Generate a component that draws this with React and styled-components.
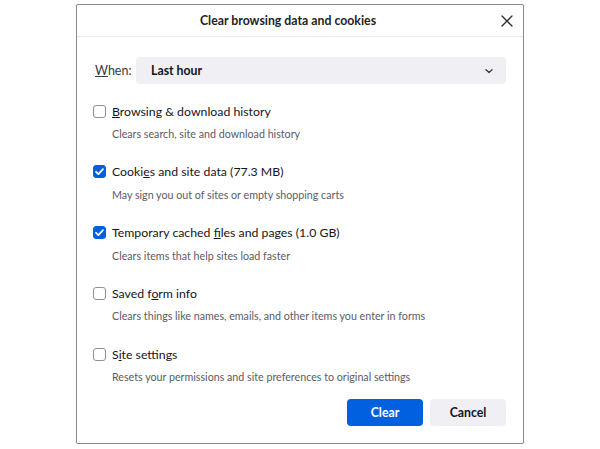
import React from 'react'
import styled, { createGlobalStyle } from 'styled-components'

const GlobalStyle = createGlobalStyle`
   html, body {
      margin: 0;
      padding: 0;
      background: #ffffff;
      font-family: Lato, "Noto Sans", sans-serif;
      color: #15141a;
   }
`

const items = [
   {
      label: ['', 'B', 'rowsing & download history'],
      desc: 'Clears search, site and download history',
      checked: false,
   },
   {
      label: ['Cooki', 'e', 's and site data (77.3 MB)'],
      desc: 'May sign you out of sites or empty shopping carts',
      checked: true,
   },
   {
      label: ['Temporary cached ', 'f', 'iles and pages (1.0 GB)'],
      desc: 'Clears items that help sites load faster',
      checked: true,
   },
   {
      label: ['Saved f', 'o', 'rm info'],
      desc: 'Clears things like names, emails, and other items you enter in forms',
      checked: false,
   },
   {
      label: ['S', 'i', 'te settings'],
      desc: 'Resets your permissions and site preferences to original settings',
      checked: false,
   },
]

const Check = ({ checked }) => (
   <Box checked={checked}>
      {checked && (
         <svg width="11" height="11" viewBox="0 0 12 12">
            <path
               d="M2.2 6.3 L4.8 8.8 L9.8 3.4"
               fill="none"
               stroke="#ffffff"
               strokeWidth="1.9"
               strokeLinecap="round"
               strokeLinejoin="round"
            />
         </svg>
      )}
   </Box>
)

export default function App() {
   return (
      <Page>
         <GlobalStyle />
         <Dialog>
            <Header>
               <Title>Clear browsing data and cookies</Title>
               <Close aria-label="Close">
                  <svg width="12" height="12" viewBox="0 0 12 12">
                     <path
                        d="M1 1 L11 11 M11 1 L1 11"
                        stroke="#2b2a33"
                        strokeWidth="1.3"
                        strokeLinecap="round"
                     />
                  </svg>
               </Close>
            </Header>
            <Body>
               <WhenRow>
                  <WhenLabel>
                     <u>W</u>hen:
                  </WhenLabel>
                  <Select>
                     <span>Last hour</span>
                     <svg width="10" height="10" viewBox="0 0 10 10">
                        <path
                           d="M2 3.8 L5 6.6 L8 3.8"
                           fill="none"
                           stroke="#3a3944"
                           strokeWidth="1.3"
                           strokeLinecap="round"
                           strokeLinejoin="round"
                        />
                     </svg>
                  </Select>
               </WhenRow>
               <List>
                  {items.map(item => (
                     <Item key={item.desc}>
                        <Row>
                           <Check checked={item.checked} />
                           <Label>
                              {item.label[0]}
                              <u>{item.label[1]}</u>
                              {item.label[2]}
                           </Label>
                        </Row>
                        <Desc>{item.desc}</Desc>
                     </Item>
                  ))}
               </List>
               <Actions>
                  <Button primary>Clear</Button>
                  <Button>Cancel</Button>
               </Actions>
            </Body>
         </Dialog>
      </Page>
   )
}

const Page = styled.div`
   width: 600px;
   height: 449px;
   box-sizing: border-box;
   padding: 4px 76px 5px 76px;
`

const Dialog = styled.div`
   width: 448px;
   height: 440px;
   box-sizing: border-box;
   border: 1px solid #8a8a8a;
   border-radius: 2px;
   background: #ffffff;
   display: flex;
   flex-direction: column;
`

const Header = styled.div`
   height: 31px;
   flex: none;
   padding-right: 24px;
   border-bottom: 1px solid #ececf0;
   display: flex;
   align-items: center;
   justify-content: center;
   position: relative;
`

const Title = styled.h1`
   margin: 0;
   font-size: 12.3px;
   font-weight: 700;
   color: #1f1e25;
`

const Close = styled.button`
   position: absolute;
   right: 8px;
   top: 8px;
   width: 16px;
   height: 16px;
   padding: 0;
   border: 0;
   background: none;
   display: flex;
   align-items: center;
   justify-content: center;
`

const Body = styled.div`
   flex: 1;
   display: flex;
   flex-direction: column;
   padding: 20px 17px 0 16px;
`

const WhenRow = styled.div`
   display: flex;
   align-items: center;
   height: 27px;
`

const WhenLabel = styled.span`
   flex: none;
   width: 43px;
   padding-left: 2px;
   box-sizing: border-box;
   font-size: 12.5px;
   color: #3a3944;
`

const Select = styled.div`
   flex: 1;
   height: 27px;
   border-radius: 4px;
   background: #f0f0f4;
   display: flex;
   align-items: center;
   justify-content: space-between;
   padding: 0 12px 0 15px;
   font-size: 12.3px;
   font-weight: 700;
   color: #15141a;
`

const List = styled.div`
   display: flex;
   flex-direction: column;
   gap: 18.75px;
   margin-top: 17px;
`

const Item = styled.div`
   display: flex;
   flex-direction: column;
   gap: 4px;
`

const Row = styled.div`
   display: flex;
   align-items: center;
   height: 20px;
   gap: 6px;
`

const Box = styled.span`
   flex: none;
   width: 13px;
   height: 13px;
   box-sizing: border-box;
   border-radius: 3px;
   border: 1px solid ${p => (p.checked ? '#0061e0' : '#8f8f9d')};
   background: ${p => (p.checked ? '#0061e0' : '#ffffff')};
   display: flex;
   align-items: center;
   justify-content: center;
`

const Label = styled.span`
   font-size: 12.3px;
   color: #15141a;
`

const Desc = styled.div`
   height: 18px;
   line-height: 18px;
   padding-left: 19px;
   font-size: 10.7px;
   color: #5b5b66;
`

const Actions = styled.div`
   display: flex;
   justify-content: flex-end;
   gap: 7px;
   margin-top: 13px;
`

const Button = styled.button`
   width: 76px;
   height: 27px;
   border: 0;
   border-radius: 4px;
   font-family: inherit;
   font-size: 12.3px;
   font-weight: 700;
   background: ${p => (p.primary ? '#0061e0' : '#f0f0f4')};
   color: ${p => (p.primary ? '#ffffff' : '#15141a')};
`
